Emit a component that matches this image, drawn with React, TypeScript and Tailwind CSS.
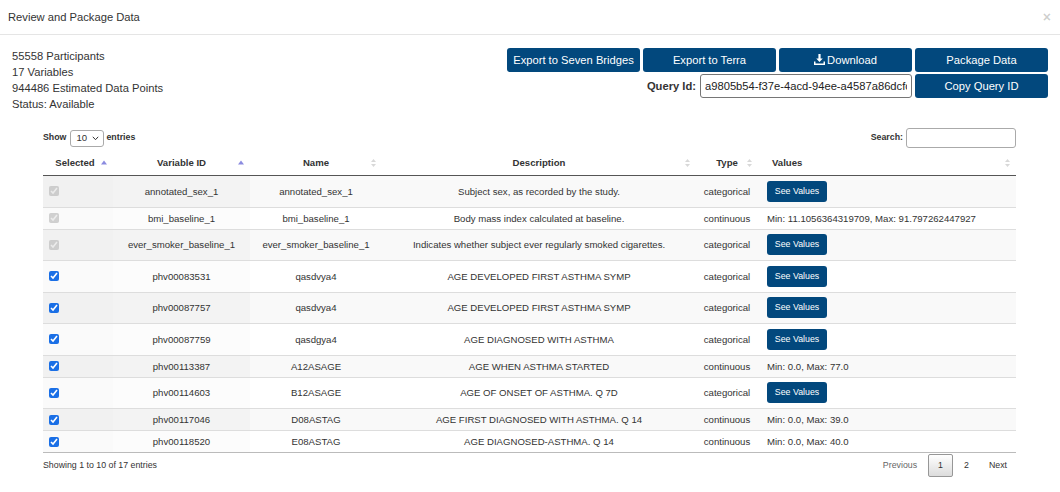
const rows = [
  { locked: true, id: 'annotated_sex_1', name: 'annotated_sex_1', desc: 'Subject sex, as recorded by the study.', type: 'categorical', values: '' },
  { locked: true, id: 'bmi_baseline_1', name: 'bmi_baseline_1', desc: 'Body mass index calculated at baseline.', type: 'continuous', values: 'Min: 11.1056364319709, Max: 91.797262447927' },
  { locked: true, id: 'ever_smoker_baseline_1', name: 'ever_smoker_baseline_1', desc: 'Indicates whether subject ever regularly smoked cigarettes.', type: 'categorical', values: '' },
  { locked: false, id: 'phv00083531', name: 'qasdvya4', desc: 'AGE DEVELOPED FIRST ASTHMA SYMP', type: 'categorical', values: '' },
  { locked: false, id: 'phv00087757', name: 'qasdvya4', desc: 'AGE DEVELOPED FIRST ASTHMA SYMP', type: 'categorical', values: '' },
  { locked: false, id: 'phv00087759', name: 'qasdgya4', desc: 'AGE DIAGNOSED WITH ASTHMA', type: 'categorical', values: '' },
  { locked: false, id: 'phv00113387', name: 'A12ASAGE', desc: 'AGE WHEN ASTHMA STARTED', type: 'continuous', values: 'Min: 0.0, Max: 77.0' },
  { locked: false, id: 'phv00114603', name: 'B12ASAGE', desc: 'AGE OF ONSET OF ASTHMA. Q 7D', type: 'categorical', values: '' },
  { locked: false, id: 'phv00117046', name: 'D08ASTAG', desc: 'AGE FIRST DIAGNOSED WITH ASTHMA. Q 14', type: 'continuous', values: 'Min: 0.0, Max: 39.0' },
  { locked: false, id: 'phv00118520', name: 'E08ASTAG', desc: 'AGE DIAGNOSED-ASTHMA. Q 14', type: 'continuous', values: 'Min: 0.0, Max: 40.0' },
];

function SortIcon({ asc }: { asc?: boolean }) {
  if (asc) {
    return (
      <svg className="absolute right-[6px] top-[10px]" width="6" height="5" viewBox="0 0 6 5">
        <path d="M3 0.5L6 4.5H0z" fill="#8b8be0" />
      </svg>
    );
  }
  return (
    <svg className="absolute right-[6px] top-[9px]" width="5" height="8" viewBox="0 0 5 8">
      <path d="M2.5 0L5 3H0z" fill="#d8d8d8" />
      <path d="M2.5 8L5 5H0z" fill="#d8d8d8" />
    </svg>
  );
}

function DownloadIcon() {
  return (
    <svg width="11" height="11" viewBox="0 0 12 12" fill="white">
      <path d="M4.8 0h2.4v4.8h2.4L6 8.6 2.4 4.8h2.4z" />
      <path d="M0 8.2h1.6v2.2h8.8V8.2H12V12H0z" />
    </svg>
  );
}

const btn = 'h-[24px] w-[133px] rounded-[3px] bg-[#02487d] text-white text-[11.2px] flex items-center justify-center';

export default function App() {
  return (
    <div className="w-[1060px] h-[492px] overflow-hidden bg-white text-[#333] font-['Liberation_Sans',Arial,sans-serif]">
      <div className="h-[35px] border-b border-[#e5e5e5] flex items-center justify-between pl-[8px] pr-[9px]">
        <span className="text-[11.2px]">Review and Package Data</span>
        <span className="text-[14px] font-bold text-black/20 leading-none">×</span>
      </div>

      <div className="flex justify-between px-[12px] pt-[13px]">
        <div className="text-[11.2px] leading-[16px]">
          <div>55558 Participants</div>
          <div>17 Variables</div>
          <div>944486 Estimated Data Points</div>
          <div>Status: Available</div>
        </div>
        <div className="flex flex-col items-end gap-[2px]">
          <div className="flex gap-[3px]">
            <button className={btn}>Export to Seven Bridges</button>
            <button className={btn}>Export to Terra</button>
            <button className={btn}>
              <span className="flex items-center gap-[2px]">
                <DownloadIcon />
                Download
              </span>
            </button>
            <button className={btn}>Package Data</button>
          </div>
          <div className="flex items-center gap-[3px]">
            <span className="text-[11.2px] font-bold mr-[1px]">Query Id:</span>
            <input
              readOnly
              value="a9805b54-f37e-4acd-94ee-a4587a86dcfc"
              className="w-[212px] h-[24px] border border-[#767676] rounded-[3px] px-[4px] text-[11.2px] text-[#222] outline-none"
            />
            <button className={btn}>Copy Query ID</button>
          </div>
        </div>
      </div>

      <div className="w-[973px] ml-[43px] mt-[16px]">
        <div className="h-[20px] flex items-center justify-between">
          <div className="flex items-center text-[8.8px] font-bold">
            <span>Show</span>
            <div className="ml-[4px] mr-[2px] w-[34px] h-[17px] border border-[#aaa] rounded-[3px] flex items-center justify-between pl-[5px] pr-[4px] font-normal text-[9.6px]">
              <span>10</span>
              <svg width="7" height="5" viewBox="0 0 7 5">
                <path d="M0.8 0.8L3.5 3.7 6.2 0.8" fill="none" stroke="#333" strokeWidth="1" />
              </svg>
            </div>
            <span>entries</span>
          </div>
          <div className="flex items-center text-[8.8px] font-bold">
            <span>Search:</span>
            <div className="ml-[3px] w-[110px] h-[20px] border border-[#aaa] rounded-[3px]" />
          </div>
        </div>

        <table className="w-[973px] mt-[2px] table-fixed border-separate border-spacing-0 text-[9.6px]">
          <colgroup>
            <col className="w-[70px]" />
            <col className="w-[137px]" />
            <col className="w-[132px]" />
            <col className="w-[314px]" />
            <col className="w-[62px]" />
            <col className="w-[258px]" />
          </colgroup>
          <thead>
            <tr>
              <th className="relative h-[26px] px-[8px] pr-[14px] leading-[13px] font-bold text-center border-b border-[#555]">
                Selected
                <SortIcon asc />
              </th>
              <th className="relative h-[26px] px-[8px] leading-[13px] font-bold text-center border-b border-[#555]">
                Variable ID
                <SortIcon asc />
              </th>
              <th className="relative h-[26px] px-[8px] leading-[13px] font-bold text-center border-b border-[#555]">
                Name
                <SortIcon />
              </th>
              <th className="relative h-[26px] px-[8px] leading-[13px] font-bold text-center border-b border-[#555]">
                Description
                <SortIcon />
              </th>
              <th className="relative h-[26px] px-[4px] leading-[13px] font-bold text-center border-b border-[#555]">
                Type
                <SortIcon />
              </th>
              <th className="relative h-[26px] pl-[14px] leading-[13px] font-bold text-left border-b border-[#555]">
                Values
                <SortIcon />
              </th>
            </tr>
          </thead>
          <tbody>
            {rows.map((r, i) => {
              const odd = i % 2 === 0;
              const line = i === 0 ? '' : 'border-t border-[#ddd]';
              const base = 'py-[4px] leading-[13px] align-middle ' + line;
              const bg = odd ? 'bg-[#f9f9f9]' : 'bg-white';
              const bg1 = odd ? 'bg-[#f1f1f1]' : 'bg-[#fafafa]';
              const bg2 = odd ? 'bg-[#f3f3f3]' : 'bg-[#fcfcfc]';
              return (
                <tr key={r.id}>
                  <td className={base + ' pl-[6px] ' + bg1}>
                    <input
                      type="checkbox"
                      checked
                      readOnly
                      disabled={r.locked}
                      className="block w-[10px] h-[10px] accent-[#1a6fe6]"
                    />
                  </td>
                  <td className={base + ' px-[4px] text-center ' + bg2}>{r.id}</td>
                  <td className={base + ' px-[4px] text-center ' + bg}>{r.name}</td>
                  <td className={base + ' px-[4px] text-center ' + bg}>{r.desc}</td>
                  <td className={base + ' px-[2px] text-center ' + bg}>{r.type}</td>
                  <td className={base + ' pl-[9px] text-left ' + bg}>
                    {r.values ? (
                      r.values
                    ) : (
                      <button className="block my-[0.75px] h-[21px] w-[60px] rounded-[3px] bg-[#02487d] text-white text-[8.8px]">
                        See Values
                      </button>
                    )}
                  </td>
                </tr>
              );
            })}
          </tbody>
        </table>
        <div className="border-t border-[#bbb]" />

        <div className="mt-[1px] flex items-center justify-between text-[8.8px]">
          <span>Showing 1 to 10 of 17 entries</span>
          <div className="flex items-center">
            <span className="h-[23px] px-[9px] flex items-center text-[#666]">Previous</span>
            <span className="ml-[2px] h-[23px] px-[9px] flex items-center border border-[#979797] rounded-[2px] bg-gradient-to-b from-white to-[#dcdcdc]">1</span>
            <span className="ml-[2px] h-[23px] px-[9px] flex items-center">2</span>
            <span className="ml-[2px] h-[23px] px-[9px] flex items-center">Next</span>
          </div>
        </div>
      </div>
    </div>
  );
}
